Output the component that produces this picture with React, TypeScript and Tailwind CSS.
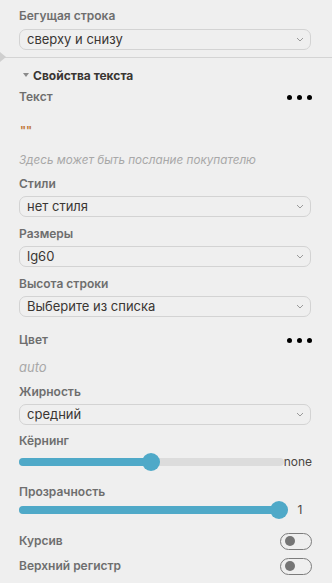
import React from "react";

const Label = ({ children, className = "" }: { children: React.ReactNode; className?: string }) => (
  <div className={`h-4 leading-4 text-[12px] font-semibold text-[#6e6e6e] ${className}`}>{children}</div>
);

const Select = ({ value, className = "" }: { value: string; className?: string }) => (
  <div
    className={`h-[21px] flex items-center justify-between rounded-[7px] border border-[#d3d3d3] bg-[#efefef] pl-[7px] pr-[5px] ${className}`}
  >
    <span className="text-[13px] leading-none text-[#3a3633]">{value}</span>
    <svg width="8" height="5" viewBox="0 0 8 5" className="mr-[1px]">
      <path d="M1 1 L4 4 L7 1" fill="none" stroke="#9a9a9a" strokeWidth="1" />
    </svg>
  </div>
);

const Dots = () => (
  <div className="flex items-center gap-[5px]">
    <div className="w-[5px] h-[5px] rounded-full bg-black" />
    <div className="w-[5px] h-[5px] rounded-full bg-black" />
    <div className="w-[5px] h-[5px] rounded-full bg-black" />
  </div>
);

const Slider = ({ fraction, label, className = "" }: { fraction: number; label: string; className?: string }) => (
  <div className={`h-5 flex items-center ${className}`}>
    <div className="relative flex-1 h-5 flex items-center">
      <div className="w-full h-2 rounded-full bg-[#dcdcdc] overflow-hidden">
        <div className="h-full bg-[#4fa9c8]" style={{ width: `calc(9px + (100% - 18px) * ${fraction})` }} />
      </div>
      <div
        className="absolute top-[1px] w-[18px] h-[18px] rounded-full bg-[#4fa9c8]"
        style={{ left: `calc((100% - 18px) * ${fraction})` }}
      />
    </div>
    <div className="min-w-[24px] text-center text-[12px] leading-none text-[#4a4542]">{label}</div>
  </div>
);

const Toggle = () => (
  <div className="w-[32px] h-[17px] rounded-full border border-[#7c7c7c] flex items-center pl-[4px]">
    <div className="w-[10px] h-[10px] rounded-full bg-[#757575]" />
  </div>
);

export default function App() {
  return (
    <div
      className="w-[332px] h-[583px] bg-[#efefef] overflow-hidden"
      style={{ fontFamily: "Inter, 'Noto Sans', sans-serif" }}
    >
      <div className="pl-[19px] pr-[21px] pt-[8px]">
        <Label>Бегущая строка</Label>
        <Select value="сверху и снизу" className="mt-[5px]" />
      </div>
      <div className="relative mt-[7px] h-px bg-[#d4d4d4]">
        <div className="absolute left-0 top-[-5px] w-0 h-0 border-t-[5px] border-b-[5px] border-l-[6px] border-t-transparent border-b-transparent border-l-[#cfcfcf]" />
      </div>
      <div className="pl-[19px] pr-[20px]">
        <div className="mt-[10px] h-4 flex items-center">
          <div className="ml-[4px] mr-[4px] w-0 h-0 border-l-[3px] border-r-[3px] border-t-[4px] border-l-transparent border-r-transparent border-t-[#8a8a8a] mb-[3px]" />
          <span className="text-[12px] font-bold text-[#3a3633]">Свойства текста</span>
        </div>
        <div className="mt-[5px] h-4 flex items-center justify-between">
          <Label>Текст</Label>
          <Dots />
        </div>
        <div className="mt-[17px] h-4 leading-4 text-[11px] font-bold text-[#c0783a] pl-[1px]">""</div>
        <div className="mt-[14px] h-4 leading-4 text-[11.7px] italic text-[#a8a8a8]">
          Здесь может быть послание покупателю
        </div>
        <div className="pr-[1px]">
          <Label className="mt-[8px]">Стили</Label>
          <Select value="нет стиля" className="mt-[4px]" />
          <Label className="mt-[9px]">Размеры</Label>
          <Select value="lg60" className="mt-[4px]" />
          <Label className="mt-[9px]">Высота строки</Label>
          <Select value="Выберите из списка" className="mt-[4px]" />
        </div>
        <div className="mt-[15px] h-4 flex items-center justify-between">
          <Label>Цвет</Label>
          <Dots />
        </div>
        <div className="mt-[11px] h-4 leading-4 text-[13px] italic text-[#a8a8a8]">auto</div>
        <div className="pr-[1px]">
          <Label className="mt-[9px]">Жирность</Label>
          <Select value="средний" className="mt-[4px]" />
        </div>
        <Label className="mt-[8px]">Кёрнинг</Label>
        <Slider fraction={0.5} label="none" className="mt-[3px]" />
        <Label className="mt-[12px]">Прозрачность</Label>
        <Slider fraction={1} label="1" />
        <div className="mt-[12px] h-[18px] flex items-center justify-between">
          <Label>Курсив</Label>
          <Toggle />
        </div>
        <div className="mt-[7px] h-[18px] flex items-center justify-between">
          <Label>Верхний регистр</Label>
          <Toggle />
        </div>
      </div>
    </div>
  );
}
